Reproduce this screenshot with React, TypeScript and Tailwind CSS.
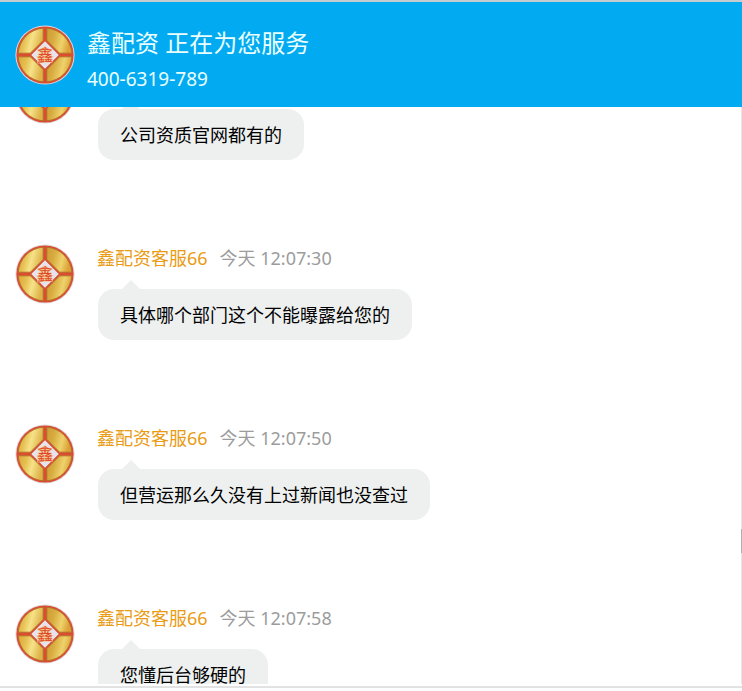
import React from 'react';

interface Message {
  id: number;
  text: string;
  /** Left out when the heading is scrolled out of view */
  sender?: string;
  time?: string;
}

const MESSAGES: Message[] = [
  { id: 1, text: '公司资质官网都有的' },
  { id: 2, sender: '鑫配资客服66', time: '今天 12:07:30', text: '具体哪个部门这个不能曝露给您的' },
  { id: 3, sender: '鑫配资客服66', time: '今天 12:07:50', text: '但营运那么久没有上过新闻也没查过' },
  { id: 4, sender: '鑫配资客服66', time: '今天 12:07:58', text: '您懂后台够硬的' },
];

/** Shared gradients for the coin, rendered once per page */
const CoinDefs: React.FC = () => (
  <svg className="absolute h-0 w-0" aria-hidden="true">
    <defs>
      <linearGradient id="coin-left" x1="0" y1="0" x2="1" y2="0.25">
        <stop offset="0" stopColor="#dba63a" />
        <stop offset="0.35" stopColor="#e6c052" />
        <stop offset="0.62" stopColor="#f6e288" />
        <stop offset="1" stopColor="#deb44a" />
      </linearGradient>
      <linearGradient id="coin-right" x1="0" y1="0" x2="1" y2="0.25">
        <stop offset="0" stopColor="#cc9c34" />
        <stop offset="0.35" stopColor="#d8ac40" />
        <stop offset="0.7" stopColor="#efd26c" />
        <stop offset="1" stopColor="#dba238" />
      </linearGradient>
    </defs>
  </svg>
);

const CoinLogo: React.FC = () => (
  <svg viewBox="0 0 60 60" className="h-[60px] w-[60px] shrink-0" role="img" aria-label="鑫配资">
    <circle cx="30" cy="30" r="29.6" fill="#ded9e2" />
    <circle cx="30" cy="30" r="28.6" fill="#dc4c30" />
    {/* Four gold quarters */}
    <g stroke="#b5702c" strokeWidth="1" strokeLinejoin="round">
      <path d="M28.2 3.2V15.4L15.4 28.2H3.2A26.9 26.9 0 0 1 28.2 3.2Z" fill="url(#coin-left)" />
      <path d="M31.8 3.2V15.4L44.6 28.2H56.8A26.9 26.9 0 0 0 31.8 3.2Z" fill="url(#coin-right)" />
      <path d="M28.2 56.8V44.6L15.4 31.8H3.2A26.9 26.9 0 0 0 28.2 56.8Z" fill="url(#coin-left)" />
      <path d="M31.8 56.8V44.6L44.6 31.8H56.8A26.9 26.9 0 0 1 31.8 56.8Z" fill="url(#coin-right)" />
    </g>
    <path d="M30 16L44 30L30 44L16 30Z" fill="#e8e2ea" stroke="#cf6048" strokeWidth="0.6" />
    <text
      x="30"
      y="36"
      textAnchor="middle"
      fontSize="16"
      fill="#e0482a"
      stroke="#f5c48a"
      strokeWidth="1.2"
      paintOrder="stroke"
    >
      鑫
    </text>
  </svg>
);

const ChatMessage: React.FC<{ message: Message }> = ({ message }) => (
  <li className="flex h-[180px] items-start gap-[22px] pl-[15px]">
    <CoinLogo />
    <div className="min-w-0">
      <div className="flex h-7 gap-3 leading-7">
        {message.sender && <span className="text-[#e99b14]">{message.sender}</span>}
        {message.time && <time className="text-[#9c9c9c]">{message.time}</time>}
      </div>
      <div className="relative mt-[17px] ml-px w-fit rounded-2xl bg-[#eef0f0] px-[22px] pt-[13px] pb-3 leading-[26px] text-black">
        <svg viewBox="0 0 18 9" className="absolute -top-[9px] left-6 h-[9px] w-[18px]" aria-hidden="true">
          <path d="M0 9L9 0L18 9Z" fill="#eef0f0" />
        </svg>
        {message.text}
      </div>
    </div>
  </li>
);

export default function App() {
  return (
    <div className="flex h-screen flex-col bg-white pb-[3px] font-['Noto_Sans','Noto_Sans_CJK_SC',sans-serif] text-[18px]">
      <CoinDefs />
      <header className="flex h-[107px] shrink-0 items-center gap-3 border-t-2 border-[#c4ccd0] bg-[#02abf1] pl-[15px] text-[#eaffff]">
        <CoinLogo />
        <div className="pt-3">
          <h1 className="text-[24px] leading-9">鑫配资 正在为您服务</h1>
          <p className="text-[19px] leading-9">400-6319-789</p>
        </div>
      </header>

      <main className="flex min-h-0 flex-1 border-b-2 border-[#e2e2e2] pb-0.5">
        {/* The log is scrolled part of the way into its first message */}
        <div className="min-w-0 flex-1 overflow-hidden">
          <ul className="-mt-[43px]">
            {MESSAGES.map((message) => (
              <ChatMessage key={message.id} message={message} />
            ))}
          </ul>
        </div>
        {/* Scroll track */}
        <div className="flex w-px flex-col bg-[#e6e6e6]">
          <div className="grow-[422]" />
          <div className="h-6 bg-[#b0b0b0]" />
          <div className="grow-[131]" />
        </div>
      </main>
    </div>
  );
}
